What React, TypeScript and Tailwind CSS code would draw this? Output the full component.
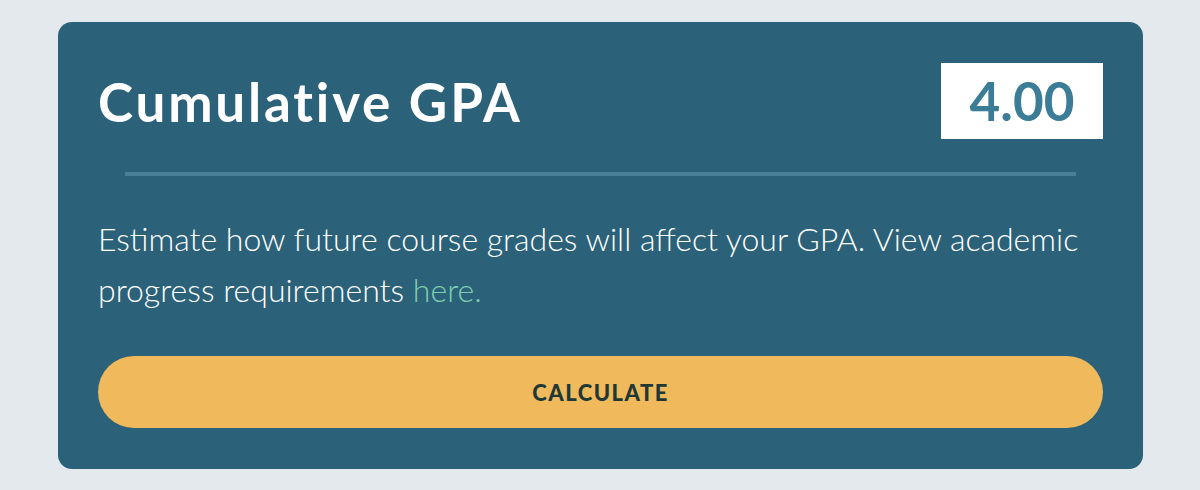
import React from "react";

export default function App() {
  return (
    <div
      className="w-[1200px] h-[490px] bg-[#e4e9ee] pt-[22px] pl-[58px]"
      style={{ fontFamily: "Lato, 'Open Sans', sans-serif" }}
    >
      <div className="w-[1085px] h-[447px] bg-[#2b6279] rounded-[14px] px-[40px] pt-[40px]">
        <div className="flex items-center justify-between h-[77px]">
          <h1 className="text-white font-bold text-[53px] leading-none tracking-[2.8px] pt-[2px]">
            Cumulative GPA
          </h1>
          <div className="w-[162px] h-[76px] bg-white flex items-center justify-center">
            <span className="text-[#3b7d97] font-bold text-[53px] leading-none">4.00</span>
          </div>
        </div>
        <div className="mx-[27px] mt-[33px] h-[4px] bg-[#4a8199]" />
        <p className="mt-[37px] text-white font-light text-[32px] leading-[51px]">
          Estimate how future course grades will affect your GPA. View academic progress requirements{" "}
          <span className="text-[#7fcdb0]">here.</span>
        </p>
        <button className="mt-[41px] w-full h-[72px] rounded-full bg-[#efb95c] text-[#1e3836] font-black text-[22px] tracking-[1.5px]">
          CALCULATE
        </button>
      </div>
    </div>
  );
}
